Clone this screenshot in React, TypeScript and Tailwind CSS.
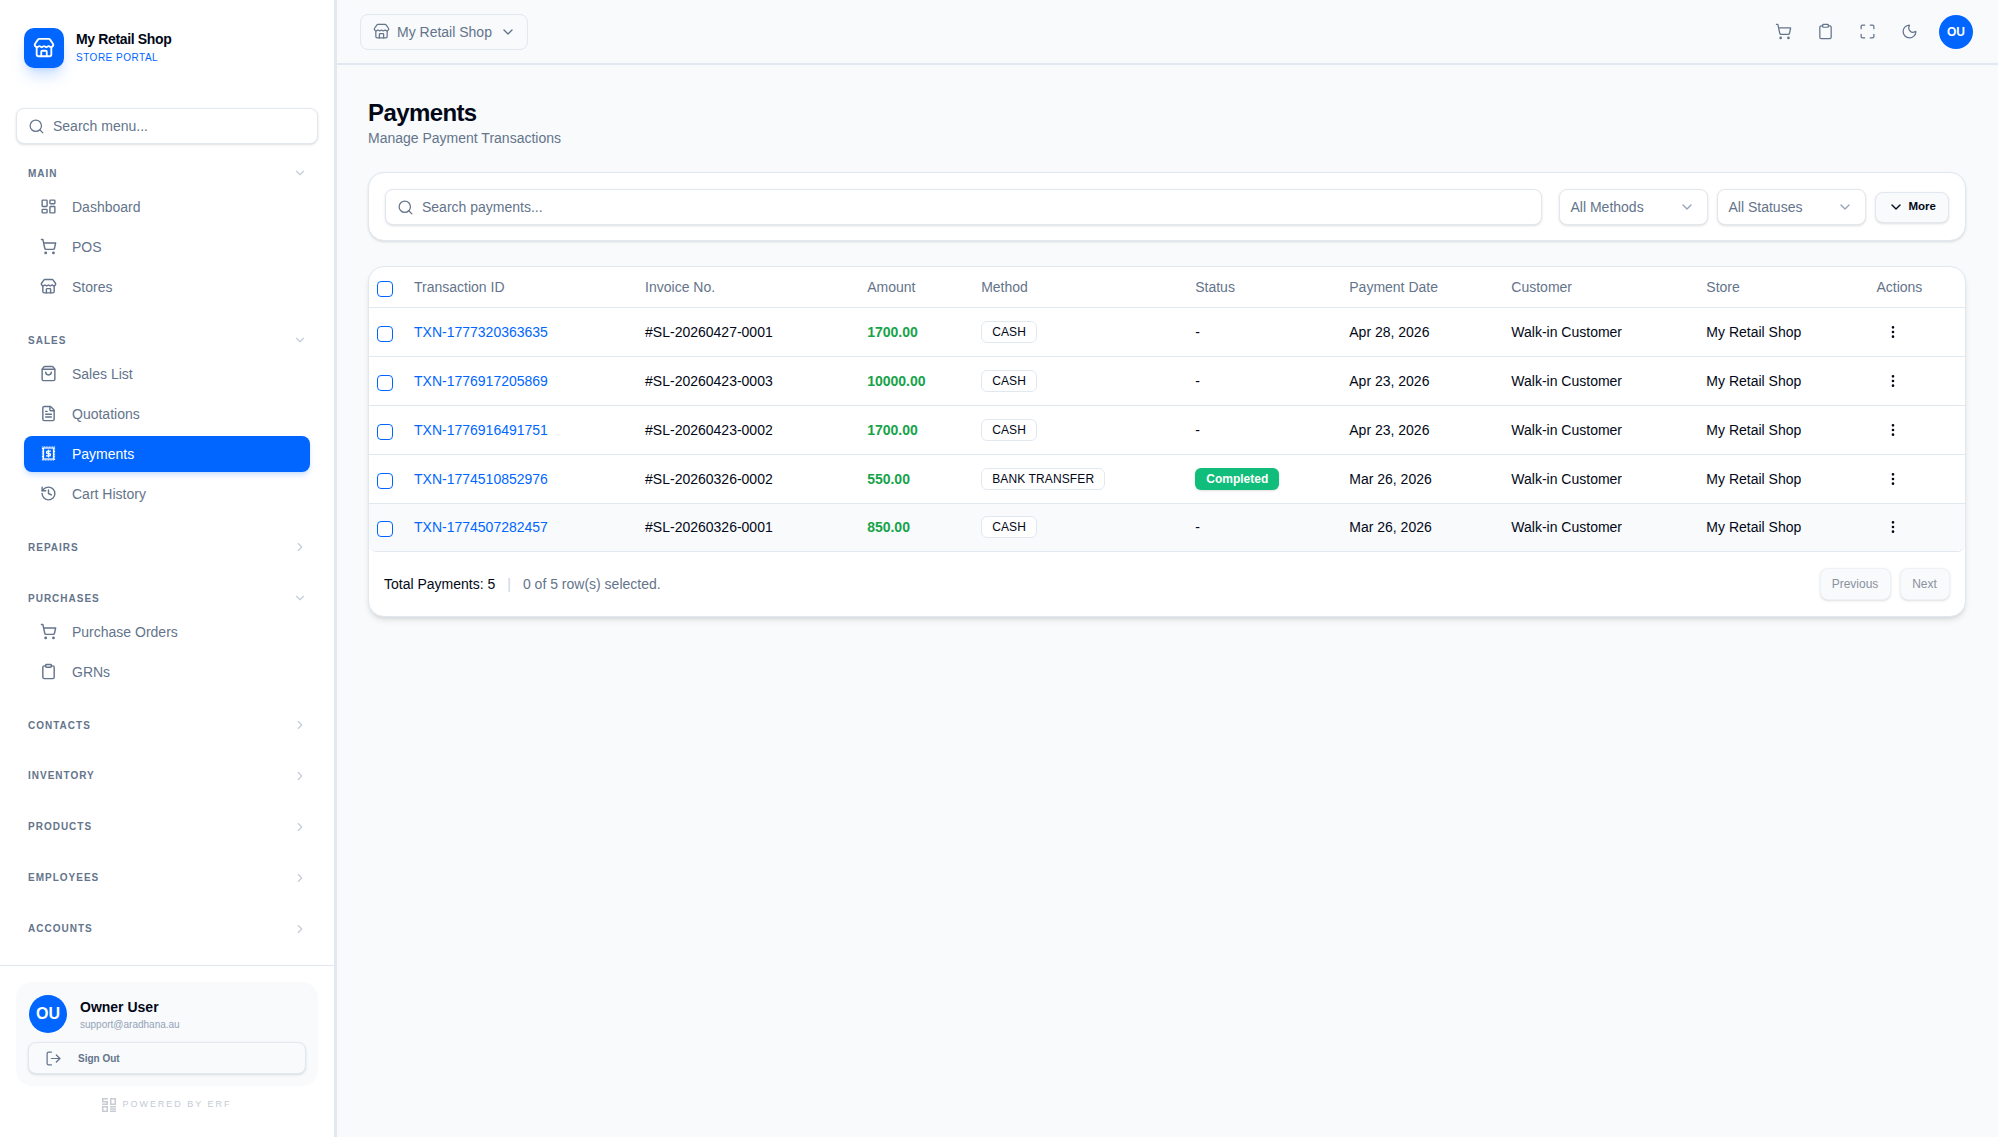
import {
	ChevronDown,
	ChevronRight,
	Clipboard,
	EllipsisVertical,
	FileText,
	History,
	LayoutDashboard,
	LogOut,
	Maximize,
	Moon,
	Search,
	ShoppingBag,
	ShoppingCart,
	Store,
} from "lucide-react";
import type React from "react";

const PaymentsIcon = () => (
	<svg width="17" height="17" viewBox="-0.5 -0.5 17 17" fill="none" stroke="currentColor">
		<rect x="2" y="1.5" width="12" height="13" strokeWidth="1.2" strokeDasharray="1 0.6" />
		<rect x="3" y="2.5" width="10" height="11" strokeWidth="1.2" />
		<path
			d="M10 5.6H7.2a1.2 1.2 0 0 0 0 2.4h1.6a1.2 1.2 0 0 1 0 2.4H6M8 4.6v6.8"
			strokeWidth="1.3"
			strokeLinecap="round"
			strokeLinejoin="round"
		/>
	</svg>
);

const ErfLogo = () => (
	<svg width="14" height="14" viewBox="0 0 14 14" fill="#c8ccd2">
		<path d="M0 0h6v1.5H1.5V3H6v4H0V5.5h4.5V4.5H0zM8 0h6v7H8zM9.5 1.5v4h3v-4zM0 8h6v6H0zM1.5 9.5v3h3v-3zM8 8h6v1.5H8zM8 10.25h6v1.5H8zM8 12.5h6V14H8z" fillRule="evenodd" />
	</svg>
);

interface NavItem {
	label: string;
	icon: React.ReactNode;
	active?: boolean;
}

interface NavSection {
	title: string;
	items?: NavItem[];
}

const navSections: NavSection[] = [
	{
		title: "MAIN",
		items: [
			{ label: "Dashboard", icon: <LayoutDashboard size={17} /> },
			{ label: "POS", icon: <ShoppingCart size={17} /> },
			{ label: "Stores", icon: <Store size={17} /> },
		],
	},
	{
		title: "SALES",
		items: [
			{ label: "Sales List", icon: <ShoppingBag size={17} /> },
			{ label: "Quotations", icon: <FileText size={17} /> },
			{ label: "Payments", icon: <PaymentsIcon />, active: true },
			{ label: "Cart History", icon: <History size={17} /> },
		],
	},
	{ title: "REPAIRS" },
	{
		title: "PURCHASES",
		items: [
			{ label: "Purchase Orders", icon: <ShoppingCart size={17} /> },
			{ label: "GRNs", icon: <Clipboard size={17} /> },
		],
	},
	{ title: "CONTACTS" },
	{ title: "INVENTORY" },
	{ title: "PRODUCTS" },
	{ title: "EMPLOYEES" },
	{ title: "ACCOUNTS" },
];

const columns = [
	{ label: "Transaction ID", width: "w-[231px]" },
	{ label: "Invoice No.", width: "w-[222px]" },
	{ label: "Amount", width: "w-[114px]" },
	{ label: "Method", width: "w-[214px]" },
	{ label: "Status", width: "w-[154px]" },
	{ label: "Payment Date", width: "w-[162px]" },
	{ label: "Customer", width: "w-[195px]" },
	{ label: "Store", width: "w-[170px]" },
	{ label: "Actions", width: "w-[100px]" },
];

const payments = [
	{ id: "TXN-1777320363635", invoice: "#SL-20260427-0001", amount: "1700.00", method: "CASH", status: "", date: "Apr 28, 2026" },
	{ id: "TXN-1776917205869", invoice: "#SL-20260423-0003", amount: "10000.00", method: "CASH", status: "", date: "Apr 23, 2026" },
	{ id: "TXN-1776916491751", invoice: "#SL-20260423-0002", amount: "1700.00", method: "CASH", status: "", date: "Apr 23, 2026" },
	{ id: "TXN-1774510852976", invoice: "#SL-20260326-0002", amount: "550.00", method: "BANK TRANSFER", status: "Completed", date: "Mar 26, 2026" },
	{ id: "TXN-1774507282457", invoice: "#SL-20260326-0001", amount: "850.00", method: "CASH", status: "", date: "Mar 26, 2026" },
];

const Checkbox = () => <span className="mt-1 block h-4 w-4 rounded-[4px] border border-[#0066ff] bg-white" />;

const Sidebar = () => (
	<aside className="flex h-full w-[337px] shrink-0 flex-col border-r-[3px] border-[#e2e8f0] bg-white">
		<div className="flex h-[108px] items-start gap-3 px-6 pt-7">
			<div className="flex h-10 w-10 items-center justify-center rounded-[10px] bg-[#0066ff] text-white shadow-lg shadow-blue-500/25">
				<Store size={22} />
			</div>
			<div className="pt-[1px]">
				<div className="text-sm leading-5 font-bold tracking-tight text-[#020817]">My Retail Shop</div>
				<div className="mt-px text-[10px] leading-4 tracking-[0.05em] text-[#0066ff]">STORE PORTAL</div>
			</div>
		</div>
		<div className="px-4">
			<div className="flex h-9 items-center gap-2 rounded-lg border border-[#e2e8f0] bg-white px-[11px] shadow-sm">
				<Search size={17} strokeWidth={1.75} className="shrink-0 text-[#64748b]" />
				<input
					readOnly
					placeholder="Search menu..."
					className="w-full bg-transparent text-sm outline-none placeholder:text-[#64748b]"
				/>
			</div>
		</div>
		<nav className="mt-[14px] flex-1 overflow-hidden px-6">
			{navSections.map((section) => (
				<div key={section.title} className="mb-5">
					<div className="flex h-[30.9px] items-center justify-between pr-[3px] pl-1">
						<span className="text-[10px] font-bold tracking-[0.1em] text-[#64748b]">{section.title}</span>
						{section.items ? (
							<ChevronDown size={14} className="text-[#c5ccd8]" />
						) : (
							<ChevronRight size={14} className="text-[#c5ccd8]" />
						)}
					</div>
					{section.items && (
						<div className="flex flex-col gap-1">
							{section.items.map((item) => (
								<div
									key={item.label}
									className={`flex h-9 items-center gap-[15px] rounded-lg pl-4 text-sm ${
										item.active ? "bg-[#0066ff] text-white shadow-md shadow-blue-500/20" : "text-[#64748b]"
									}`}
								>
									{item.icon}
									<span>{item.label}</span>
								</div>
							))}
						</div>
					)}
				</div>
			))}
		</nav>
		<div className="h-[172px] shrink-0 border-t border-[#e2e8f0] px-4 pt-4">
			<div className="rounded-2xl bg-[#f8fafc] px-3 pt-[13px] pb-3">
				<div className="flex items-center gap-[13px] pl-px">
					<div className="flex h-[38px] w-[38px] items-center justify-center rounded-full bg-[#0066ff] text-base font-bold text-white">
						OU
					</div>
					<div className="pt-[2px]">
						<div className="text-sm leading-5 font-bold text-[#020817]">Owner User</div>
						<div className="text-[10px] leading-4 text-[#94a3b8]">support@aradhana.au</div>
					</div>
				</div>
				<div className="mt-[9px] flex h-8 items-center gap-4 rounded-lg border border-[#e2e8f0] bg-[#f8fafc] pl-4 text-[10px] font-bold text-[#64748b] shadow-sm">
					<LogOut size={17} strokeWidth={1.75} />
					<span>Sign Out</span>
				</div>
			</div>
			<div className="mt-3 flex items-center justify-center gap-[6px]">
				<ErfLogo />
				<span className="text-[9px] tracking-[0.22em] text-[#c4cad4]">POWERED BY ERF</span>
			</div>
		</div>
	</aside>
);

const TopBar = () => (
	<header className="flex h-[65px] shrink-0 items-center justify-between border-b-2 border-[#e2e8f0] pr-[25px] pl-[23px]">
		<div className="flex h-9 w-[168px] items-center gap-[7px] rounded-lg border border-[#e2e8f0] bg-[#f8fafc] pl-3 text-sm text-[#64748b]">
			<Store size={17} strokeWidth={1.75} />
			<span>My Retail Shop</span>
			<ChevronDown size={16} className="ml-[1px]" />
		</div>
		<div className="flex items-center text-[#64748b]">
			<div className="flex w-[42px] justify-center">
				<ShoppingCart size={17} strokeWidth={1.75} />
			</div>
			<div className="flex w-[42px] justify-center">
				<Clipboard size={17} strokeWidth={1.75} />
			</div>
			<div className="flex w-[42px] justify-center">
				<Maximize size={17} strokeWidth={1.75} />
			</div>
			<div className="flex w-[42px] justify-center">
				<Moon size={17} strokeWidth={1.75} />
			</div>
			<div className="ml-[9px] flex h-[34px] w-[34px] items-center justify-center rounded-full bg-[#0066ff] text-xs font-bold text-white">
				OU
			</div>
		</div>
	</header>
);

const Filters = () => (
	<div className="mt-6 flex items-center rounded-2xl border border-[#e2e8f0] bg-white px-4 pt-4 pb-[15px] shadow-sm">
		<div className="flex h-9 flex-1 items-center gap-2 rounded-lg border border-[#e2e8f0] bg-white px-[11px] shadow-sm">
			<Search size={17} strokeWidth={1.75} className="shrink-0 text-[#64748b]" />
			<input
				readOnly
				placeholder="Search payments..."
				className="w-full bg-transparent text-sm outline-none placeholder:text-[#64748b]"
			/>
		</div>
		<div className="ml-[17px] flex h-9 w-[149px] items-center justify-between rounded-lg border border-[#e2e8f0] bg-white pr-3 pl-[11px] text-sm text-[#64748b] shadow-sm">
			<span>All Methods</span>
			<ChevronDown size={16} className="text-[#94a3b8]" />
		</div>
		<div className="ml-[9px] flex h-9 w-[149px] items-center justify-between rounded-lg border border-[#e2e8f0] bg-white pr-3 pl-[11px] text-sm text-[#64748b] shadow-sm">
			<span>All Statuses</span>
			<ChevronDown size={16} className="text-[#94a3b8]" />
		</div>
		<div className="ml-[9px] flex h-[31px] w-[74px] items-center gap-[5px] rounded-lg border border-[#e2e8f0] bg-[#f8fafc] pl-3 text-[11.5px] font-bold text-[#020817] shadow-sm">
			<ChevronDown size={16} />
			<span>More</span>
		</div>
	</div>
);

const PaymentsTable = () => (
	<div className="mt-[25px] rounded-2xl border border-[#e2e8f0] bg-white shadow-md">
		<div className="overflow-hidden rounded-t-2xl rounded-b-lg border-b border-[#e2e8f0]">
			<table className="w-full table-fixed border-collapse text-sm">
				<colgroup>
					<col className="w-[33px]" />
					{columns.map((c) => (
						<col key={c.label} className={c.width} />
					))}
				</colgroup>
				<thead>
					<tr className="h-10 border-b border-[#e2e8f0]">
						<th className="pl-2">
							<Checkbox />
						</th>
						{columns.map((c) => (
							<th key={c.label} className="px-3 text-left font-normal text-[#64748b]">
								{c.label}
							</th>
						))}
					</tr>
				</thead>
				<tbody>
					{payments.map((p, i) => (
						<tr
							key={p.id}
							className={`text-[#020817] ${i < 4 ? "h-[49px] border-b border-[#e2e8f0]" : "h-12 bg-[#f8fafc]"}`}
						>
							<td className="pl-2">
								<Checkbox />
							</td>
							<td className="px-3 text-[#0066ff]">{p.id}</td>
							<td className="px-3">{p.invoice}</td>
							<td className="px-3 font-bold text-[#16a34a]">{p.amount}</td>
							<td className="px-3">
								<span className="inline-flex h-[22px] items-center rounded-md border border-[#e2e8f0] bg-white px-[10px] text-xs tracking-[0.01em]">
									{p.method}
								</span>
							</td>
							<td className="px-3">
								{p.status ? (
									<span className="inline-flex h-[22px] items-center rounded-md bg-[#10bd7a] px-[11px] text-xs font-bold text-white shadow-sm">
										{p.status}
									</span>
								) : (
									"-"
								)}
							</td>
							<td className="px-3">{p.date}</td>
							<td className="px-3">Walk-in Customer</td>
							<td className="px-3">My Retail Shop</td>
							<td className="pl-[21px]">
								<EllipsisVertical size={16} />
							</td>
						</tr>
					))}
				</tbody>
			</table>
		</div>
		<div className="flex h-16 items-center justify-between pr-[15px] pl-[15px] text-sm">
			<div className="flex items-center">
				<span className="text-[#020817]">Total Payments: 5</span>
				<span className="mx-3 text-[#cbd5e1]">|</span>
				<span className="text-[#64748b]">0 of 5 row(s) selected.</span>
			</div>
			<div className="flex gap-[9px] text-xs text-[#8a919c]">
				<span className="flex h-8 w-[71px] items-center justify-center rounded-lg border border-[#eef2f6] bg-[#f8fafc] shadow-sm">
					Previous
				</span>
				<span className="flex h-8 w-[50px] items-center justify-center rounded-lg border border-[#eef2f6] bg-[#f8fafc] shadow-sm">
					Next
				</span>
			</div>
		</div>
	</div>
);

const App: React.FC = () => (
	<div className="flex h-screen w-full overflow-hidden bg-[#f8fafc] font-['Liberation_Sans',Arial,sans-serif]">
		<Sidebar />
		<main className="flex min-w-0 flex-1 flex-col">
			<TopBar />
			<div className="pt-8 pr-[32.5px] pl-[31px]">
				<h1 className="text-2xl font-bold tracking-tight text-[#020817]">Payments</h1>
				<p className="-mt-px text-sm text-[#64748b]">Manage Payment Transactions</p>
				<Filters />
				<PaymentsTable />
			</div>
		</main>
	</div>
);

export default App;
